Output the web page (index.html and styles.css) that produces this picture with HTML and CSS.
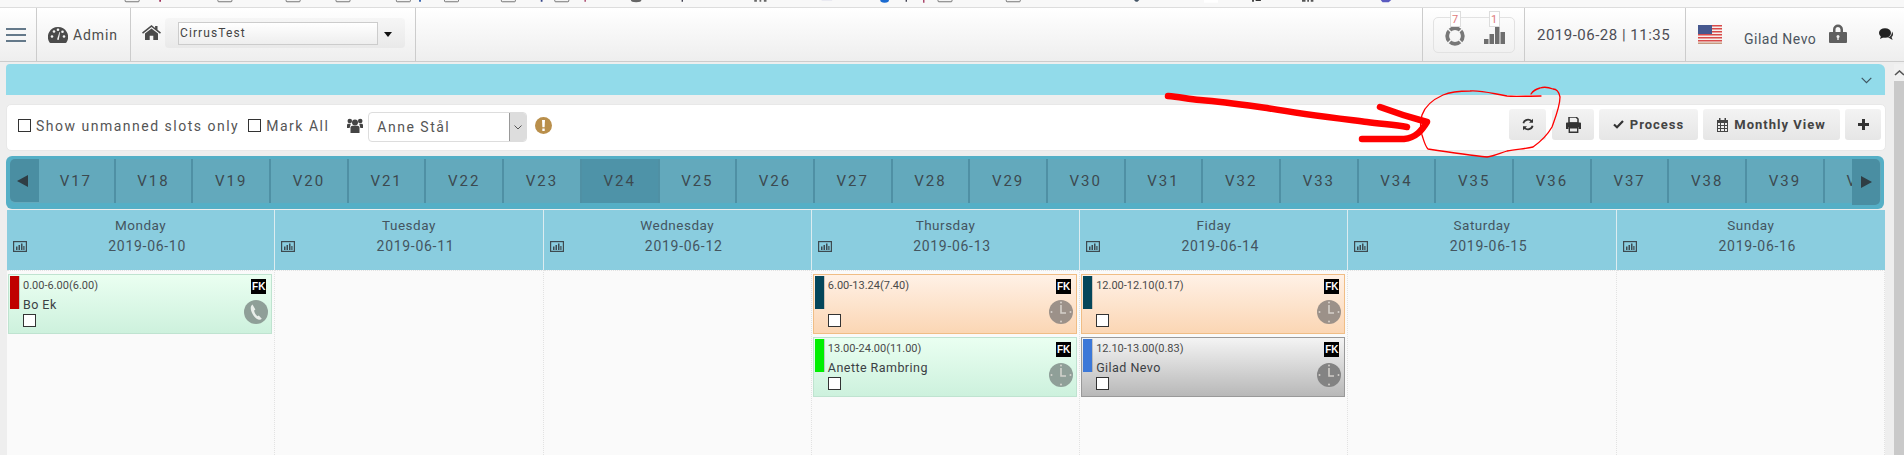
FILE: index.html
```html
<!DOCTYPE html>
<html lang="en">
<head>
<meta charset="utf-8">
<title>Schedule</title>
<link rel="stylesheet" href="styles.css">
</head>
<body>
<svg class="defs" width="0" height="0" aria-hidden="true">
  <symbol id="clock" viewBox="0 0 24 24"><circle cx="12" cy="12" r="12" fill="currentColor"/><path d="M12 5v8h5" fill="none" stroke="#e4e0da" stroke-width="1.6" opacity=".8"/><g fill="#e4e0da" opacity=".8"><circle cx="12" cy="2.5" r="1"/><circle cx="12" cy="21.5" r="1"/><circle cx="2.5" cy="12" r="1"/><circle cx="21.5" cy="12" r="1"/></g></symbol>
  <symbol id="phone" viewBox="0 0 24 24"><circle cx="12" cy="12" r="12" fill="currentColor"/><path d="M8.5 4.5c-2 1.4-2.3 4-.9 7.500 1.400 3.500 3.800 6.400 6.600 7.500 1.500.6 2.800.2 3.600-.7l-3-3.200-1.400.6c-1.700-1.100-3-3.500-3.300-5.600l1.300-1z" fill="#e9eeea"/></symbol>
  <symbol id="chartbox" viewBox="0 0 14 11"><rect x=".6" y=".6" width="12.800" height="9.800" fill="none" stroke="#3d4a50" stroke-width="1.200"/><path d="M3 5.500h1.500V9H3zM5.500 4H7v5H5.500zM8 2.500h1.500V9H8zM10.300 5h1.200v4h-1.200z" fill="#3d4a50"/></symbol>
</svg>

<svg class="strip" viewBox="0 0 1904 8" aria-hidden="true">
  <g class="strip-boxes">
    <rect x="7" y="-4" width="16" height="6" rx="1"/><rect x="113" y="-4" width="16" height="6" rx="1"/><rect x="191" y="-4" width="16" height="6" rx="1"/><rect x="248" y="-4" width="16" height="6" rx="1"/><rect x="317" y="-4" width="16" height="6" rx="1"/><rect x="372" y="-4" width="16" height="6" rx="1"/><rect x="437" y="-4" width="16" height="6" rx="1"/><rect x="498" y="-4" width="16" height="6" rx="1"/><rect x="936" y="-4" width="16" height="6" rx="1"/><rect x="1014" y="-4" width="16" height="6" rx="1"/>
  </g>
  <path d="M46 0h2v2h-2z" fill="#a0305a"/><path d="M343 0h2v2h-2z" fill="#2255aa"/><path d="M482 0h2v2h-2z" fill="#334488"/><path d="M532 0h1.500v2H532z" fill="#a0305a"/>
  <ellipse cx="591" cy="0" rx="6" ry="2.500" fill="#666"/><path d="M643 0h1.500v2H643z" fill="#334"/><path d="M726 0h3v2h-3zM732 0h2v2h-2zM737 0h3v2h-3z" fill="#666"/>
  <rect x="803" y="0" width="12" height="1" fill="#e8e8f0"/><ellipse cx="875" cy="0" rx="5" ry="3" fill="#1a6ad0"/><path d="M899 0h1.500v2H899z" fill="#334"/><path d="M919 0h1.500v3H919z" fill="#a0305a"/>
  <path d="M1160 0h6l-2 2h-2z" fill="#456"/><rect x="1240" y="0" width="16" height="3" fill="#fff"/><path d="M1295 0h2v2h-2zM1299 0h6v1h-6z" fill="#333"/><path d="M1352 0h4v2h-4zM1358 0h2v2h-2zM1362 0h3v2h-3z" fill="#555"/><path d="M1442 0h12l-3 2.500h-7z" fill="#5a5ac0"/>
</svg>

<header class="topbar">
  <div class="cell cell-menu"><span class="burger"><i></i><i></i><i></i></span></div>
  <div class="cell cell-admin">
    <svg class="ico-gauge" viewBox="0 0 20 16"><path d="M10 0a10 10 0 0 0-8.600 15.200c.2.400.6.800 1.100.8h15c.5 0 .9-.4 1.100-.8A10 10 0 0 0 10 0z" fill="#4b4b4b"/><g fill="#f4f4f4"><circle cx="4" cy="9.500" r="1.300"/><circle cx="6" cy="4.500" r="1.300"/><circle cx="10" cy="2.800" r="1.300"/><circle cx="16" cy="9.500" r="1.300"/><circle cx="14.500" cy="4.800" r="1.300"/></g><path d="M9 12.500 11.500 5l.6.200-1.400 7.800z" fill="#f4f4f4"/></svg>
    <span>Admin</span>
  </div>
  <div class="cell cell-org">
    <svg class="ico-home" viewBox="0 0 19 15"><path d="M9.500 0 0 7.600l1 1.100L9.500 2l8.500 6.700 1-1.100-3.500-2.800V1h-2.400v1.900z" fill="#4b4b4b"/><path d="M9.500 3.400 3 8.500V15h4.700v-4.300h3.600V15H16V8.500z" fill="#4b4b4b"/></svg>
    <div class="org-select"><span class="org-input">CirrusTest</span><i class="caret"></i></div>
  </div>
  <div class="cell cell-fill"></div>
  <div class="cell cell-stats">
    <div class="stats-box">
      <div class="stat">
        <span class="stat-badge">7</span>
        <svg class="ico-buoy" viewBox="0 0 20 20"><circle cx="10" cy="10" r="7.800" fill="none" stroke="#777" stroke-width="3.800"/><g stroke="#f4f4f4" stroke-width="1.300"><path d="M3 3l3.500 3.500M17 3l-3.500 3.500M3 17l3.500-3.500M17 17l-3.500-3.500"/></g></svg>
      </div>
      <div class="stat">
        <span class="stat-badge">1</span>
        <svg class="ico-bars" viewBox="0 0 21 18"><path d="M0 13h4.500v5H0zM5.500 8h4.500v10H5.500zM11 0h4.500v18H11zM16.500 6H21v12h-4.500z" fill="#6e6e6e"/></svg>
      </div>
    </div>
  </div>
  <div class="cell cell-date">2019-06-28 | 11:35</div>
  <div class="cell cell-user">
    <svg class="ico-flag" viewBox="0 0 24 19"><rect width="24" height="19" fill="#f6f0ec"/><path d="M0 0h24v1.500H0zM0 3h24v1.500H0zM0 6h24v1.500H0zM0 9h24v1.500H0zM0 12h24v1.500H0zM0 15h24v1.500H0z" fill="#d84a4a"/><rect y="17.500" width="24" height="1.500" fill="#c69a80"/><rect width="14" height="9" fill="#46588f"/></svg>
    <span class="user-name">Gilad Nevo</span>
    <svg class="ico-lock" viewBox="0 0 18 19"><path d="M4 8V5.500a5 5 0 0 1 10 0V8h-2.500V5.500a2.500 2.500 0 0 0-5 0V8z" fill="#5f5f5f"/><rect y="8" width="18" height="11" rx="1" fill="#5f5f5f"/><circle cx="9" cy="12.500" r="1.500" fill="#eee"/><rect x="8.300" y="12.500" width="1.400" height="3.500" fill="#eee"/></svg>
    <svg class="ico-chat" viewBox="0 0 15 13"><ellipse cx="6" cy="5" rx="6" ry="4.800" fill="#222"/><path d="M2 8 1 11l4-2z" fill="#222"/><path d="M13 3.500c1.600 1.800 1.400 4.500-.4 5.600l1 2.900-3.500-2H7.500c2.500 0 5.500-2.400 5.500-6.500z" fill="#333"/></svg>
  </div>
</header>

<div class="layout">
  <main class="main">
    <div class="accordion">
      <svg class="chevron" viewBox="0 0 11 7"><path d="M.7.8 5.500 5.600 10.300.8" fill="none" stroke="#3f5560" stroke-width="1.200"/></svg>
    </div>

    <div class="toolbar">
      <label class="check"><i class="box"></i>Show unmanned slots only</label>
      <label class="check check-all"><i class="box"></i>Mark All</label>
      <svg class="ico-users" viewBox="0 0 16 15"><g fill="#444"><circle cx="8" cy="4.500" r="3"/><circle cx="2.800" cy="3" r="2.300"/><circle cx="13.200" cy="3" r="2.300"/><path d="M3.500 15V9.500c0-1 1-1.800 2-1.800h5c1 0 2 .8 2 1.800V15z"/><path d="M0 10V7c0-.7.600-1.300 1.300-1.300h2.500L2.600 10zM16 10V7c0-.7-.6-1.300-1.300-1.300h-2.500l1.200 4.300z"/></g></svg>
      <div class="person-select"><span class="person-name">Anne Stål</span><span class="person-arrow"><svg viewBox="0 0 8 5"><path d="M.5.500 4 4 7.500.5" fill="none" stroke="#555"/></svg></span></div>
      <svg class="ico-info" viewBox="0 0 17 17"><circle cx="8.500" cy="8.500" r="8.500" fill="#b98f4b"/><path d="M7 3h3l-.4 7.300H7.400z" fill="#fff"/><rect x="7.300" y="11.500" width="2.400" height="2.500" fill="#fff"/></svg>
      <div class="actions">
        <button class="btn btn-icon">
          <svg class="ico-refresh" viewBox="0 0 12 13"><path d="M1.400 5.300A4.700 4.700 0 0 1 9.500 3.200M10.600 7.700A4.700 4.700 0 0 1 2.500 9.800" fill="none" stroke="#333" stroke-width="1.800"/><path d="M11 .8v4H7zM1 12.200v-4h4z" fill="#333"/></svg>
        </button>
        <button class="btn btn-print">
          <svg class="ico-print" viewBox="0 0 15 16"><path d="M3 0h7l2 2v4H3z" fill="none" stroke="#333" stroke-width="1.500"/><path d="M0 6.500c0-.6.500-1 1-1h13c.5 0 1 .4 1 1V12h-2.500v-2h-10v2H0z" fill="#333"/><path d="M3.300 10.800h8.400V15.300H3.300z" fill="none" stroke="#333" stroke-width="1.400"/></svg>
        </button>
        <button class="btn btn-process">
          <svg class="ico-check" viewBox="0 0 11 9"><path d="M1 4.500 4 7.300 10 1" fill="none" stroke="#333" stroke-width="2.200"/></svg>Process
        </button>
        <button class="btn btn-month">
          <svg class="ico-cal" viewBox="0 0 11 14"><path d="M0 2h11v12H0z" fill="#444"/><path d="M1 5h2v2H1zM4 5h3v2H4zM8 5h2v2H8zM1 8h2v2H1zM4 8h3v2H4zM8 8h2v2H8zM1 11h2v2H1zM4 11h3v2H4zM8 11h2v2H8z" fill="#eee"/><path d="M2 0h1.500v3H2zM7.500 0H9v3H7.500z" fill="#444"/></svg>Monthly View
        </button>
        <button class="btn btn-plus">
          <svg class="ico-plus" viewBox="0 0 11 11"><path d="M4 0h3v4h4v3H7v4H4V7H0V4h4z" fill="#333"/></svg>
        </button>
      </div>
    </div>

    <nav class="weekbar">
      <div class="weeks">
        <span class="week">V17</span><span class="week">V18</span><span class="week">V19</span><span class="week">V20</span><span class="week">V21</span><span class="week">V22</span><span class="week">V23</span><span class="week week-active">V24</span><span class="week">V25</span><span class="week">V26</span><span class="week">V27</span><span class="week">V28</span><span class="week">V29</span><span class="week">V30</span><span class="week">V31</span><span class="week">V32</span><span class="week">V33</span><span class="week">V34</span><span class="week">V35</span><span class="week">V36</span><span class="week">V37</span><span class="week">V38</span><span class="week">V39</span><span class="week">V40</span>
      </div>
      <span class="nav nav-prev"><i></i></span>
      <span class="nav nav-next"><i></i></span>
    </nav>

    <section class="calendar">
      <div class="day">
        <div class="day-head"><div class="day-name">Monday</div><div class="day-date"><svg class="ico-box"><use href="#chartbox"/></svg><span>2019-06-10</span></div></div>
        <div class="day-body">
          <article class="slot slot-green">
            <i class="slot-bar bar-red"></i>
            <div class="slot-main"><div class="slot-time">0.00-6.00(6.00)</div><div class="slot-name">Bo Ek</div><i class="slot-check"></i></div>
            <div class="slot-side"><b class="fk">FK</b><svg class="slot-ico ico-green"><use href="#phone"/></svg></div>
          </article>
        </div>
      </div>
      <div class="day">
        <div class="day-head"><div class="day-name">Tuesday</div><div class="day-date"><svg class="ico-box"><use href="#chartbox"/></svg><span>2019-06-11</span></div></div>
        <div class="day-body"></div>
      </div>
      <div class="day">
        <div class="day-head"><div class="day-name">Wednesday</div><div class="day-date"><svg class="ico-box"><use href="#chartbox"/></svg><span>2019-06-12</span></div></div>
        <div class="day-body"></div>
      </div>
      <div class="day">
        <div class="day-head"><div class="day-name">Thursday</div><div class="day-date"><svg class="ico-box"><use href="#chartbox"/></svg><span>2019-06-13</span></div></div>
        <div class="day-body">
          <article class="slot slot-orange">
            <i class="slot-bar bar-teal"></i>
            <div class="slot-main"><div class="slot-time">6.00-13.24(7.40)</div><div class="slot-name">&nbsp;</div><i class="slot-check"></i></div>
            <div class="slot-side"><b class="fk">FK</b><svg class="slot-ico ico-orange"><use href="#clock"/></svg></div>
          </article>
          <article class="slot slot-green">
            <i class="slot-bar bar-lime"></i>
            <div class="slot-main"><div class="slot-time">13.00-24.00(11.00)</div><div class="slot-name">Anette Rambring</div><i class="slot-check"></i></div>
            <div class="slot-side"><b class="fk">FK</b><svg class="slot-ico ico-green"><use href="#clock"/></svg></div>
          </article>
        </div>
      </div>
      <div class="day">
        <div class="day-head"><div class="day-name">Fiday</div><div class="day-date"><svg class="ico-box"><use href="#chartbox"/></svg><span>2019-06-14</span></div></div>
        <div class="day-body">
          <article class="slot slot-orange">
            <i class="slot-bar bar-teal"></i>
            <div class="slot-main"><div class="slot-time">12.00-12.10(0.17)</div><div class="slot-name">&nbsp;</div><i class="slot-check"></i></div>
            <div class="slot-side"><b class="fk">FK</b><svg class="slot-ico ico-orange"><use href="#clock"/></svg></div>
          </article>
          <article class="slot slot-gray">
            <i class="slot-bar bar-blue"></i>
            <div class="slot-main"><div class="slot-time">12.10-13.00(0.83)</div><div class="slot-name">Gilad Nevo</div><i class="slot-check"></i></div>
            <div class="slot-side"><b class="fk">FK</b><svg class="slot-ico ico-gray"><use href="#clock"/></svg></div>
          </article>
        </div>
      </div>
      <div class="day">
        <div class="day-head"><div class="day-name">Saturday</div><div class="day-date"><svg class="ico-box"><use href="#chartbox"/></svg><span>2019-06-15</span></div></div>
        <div class="day-body"></div>
      </div>
      <div class="day day-last">
        <div class="day-head"><div class="day-name">Sunday</div><div class="day-date"><svg class="ico-box"><use href="#chartbox"/></svg><span>2019-06-16</span></div></div>
        <div class="day-body"></div>
      </div>
    </section>
  </main>
  <aside class="scrollbar"><span class="scroll-up"><svg viewBox="0 0 10 6"><path d="M1 5 5.500 1 10 5" fill="none" stroke="#555" stroke-width="1.600"/></svg></span></aside>
</div>

<svg class="scribble" viewBox="0 0 1904 455" aria-hidden="true">
  <path class="scribble-thick" d="M1168 96 C1180 97 1188 99 1200 100 C1225 102 1245 105 1267 108 C1300 114 1335 118 1367 122 C1382 124 1395 125 1407 127"/>
  <path class="scribble-thick" d="M1380 107 C1396 113 1412 118 1427 122 C1422 130 1416 138 1404 139 L1362 139"/>
  <path class="scribble-thin" d="M1541 96 C1525 96 1515 97 1507 96 C1490 93 1480 90 1470 91 C1457 91 1450 92 1443 95 C1432 100 1425 106 1422 115 C1420 122 1420 128 1422 135 C1424 141 1425 146 1428 149 C1448 152 1468 155 1487 157 C1495 156 1500 153 1507 151 C1516 149 1525 149 1533 147 C1540 142 1548 134 1552 127 C1556 116 1560 106 1560 97 C1559 92 1556 89 1553 89 C1548 87 1543 87 1540 88 C1536 89 1533 91 1531 94"/>
</svg>
</body>
</html>
```

FILE: styles.css
```css
* { box-sizing: border-box; }

html, body { margin: 0; height: 455px; overflow: hidden; }

body {
  position: relative;
  background: #eee;
  font-family: Roboto, "Liberation Sans", sans-serif;
  color: #444;
}

i { display: block; }
.defs { position: absolute; }

.strip { display: block; width: 1904px; height: 8px; background: #f8f8f8; border-bottom: 1px solid #ddd; }
.strip-boxes rect { fill: #f4f4f4; stroke: #666; stroke-width: 1; }

/* top bar */
.topbar {
  display: flex;
  height: 54px;
  background: linear-gradient(#fff, #eee);
  border-bottom: 1px solid #ccc;
}
.cell { display: flex; align-items: center; border-right: 1px solid #ccc; flex: none; }
.cell-menu { width: 37px; padding: 0 0 0 6px; }
.burger { display: flex; flex-direction: column; gap: 3.500px; width: 20px; margin-top: 1px; }
.burger i { height: 2.500px; background: #64798a; }
.cell-admin { width: 94px; padding-left: 11px; gap: 5px; font-size: 14px; letter-spacing: .9px; color: #4c4c4c; }
.ico-gauge { width: 20px; height: 16px; }
.cell-org { width: 285px; padding-left: 11px; gap: 4px; }
.ico-home { width: 19px; height: 15px; margin-top: -5px; }
.org-select {
  width: 240px; height: 30px; margin-top: -4px; padding: 4px 0 0 13px;
  display: flex; align-items: flex-start; gap: 6px;
  background: linear-gradient(#f6f6f6, #e9e9e9); border-radius: 4px;
}
.org-input {
  width: 200px; height: 23px; padding-left: 1px; line-height: 21px;
  font-size: 12px; letter-spacing: 1.100px; color: #444;
  background: linear-gradient(#fff, #eee); border: 1px solid #ccc;
}
.caret { margin-top: 10px; border: 4px solid transparent; border-top: 5px solid #111; border-bottom: 0; }
.cell-fill { flex: 1; }
.cell-stats { width: 102px; padding: 0 0 0 10px; }
.stats-box {
  display: flex; width: 82px; height: 36px;
  border: 1px solid #e2e2e2; border-radius: 5px; padding: 0 9px 0 10px; justify-content: space-between;
}
.stat { display: flex; flex-direction: column; align-items: center; width: 22px; margin-top: -7px; }
.stat-badge {
  width: 11px; height: 16px; font-size: 11px; line-height: 15px; text-align: center;
  background: #fff; border: 1px solid #ddd; color: #e07b7b; margin-bottom: -1px; position: relative;
}
.ico-buoy { width: 20px; height: 20px; }
.ico-bars { width: 21px; height: 18px; }
.cell-date { width: 161px; padding-left: 12px; font-size: 15px; letter-spacing: .5px; color: #4d4d55; white-space: nowrap; }
.cell-user { width: 218px; border-right: 0; padding-left: 12px; }
.ico-flag { width: 24px; height: 19px; margin-top: -1px; }
.user-name { width: 74px; margin: 8px 0 0 22px; font-size: 14px; letter-spacing: .5px; color: #4c5560; white-space: nowrap; }
.ico-lock { width: 18px; height: 19px; margin: -2px 0 0 11px; }
.ico-chat { width: 15px; height: 13px; margin: 0 0 0 32px; }

/* main column */
.layout { display: flex; height: 393px; }
.main { width: 1885px; padding: 2px 0 0 6px; flex: none; }
.scrollbar { width: 10px; margin: 2px 0 0 9px; background: #c9c9c9; flex: none; }
.scroll-up { display: flex; justify-content: center; align-items: center; height: 17px; background: #f1f1f1; }
.scroll-up svg { width: 10px; height: 6px; }

.accordion {
  height: 31px; background: #92dbea; border-radius: 4px 6px 0 0;
  display: flex; justify-content: flex-end; padding: 13px 13px 0 0;
}
.chevron { width: 11px; height: 7px; }

.toolbar {
  display: flex; align-items: center;
  width: 1880px; height: 47px; margin-top: 9px; padding: 0 4px 4px 11px;
  background: #fff; border: 1px solid #e8e8e8; border-radius: 5px;
  font-size: 14px; letter-spacing: 1.500px; color: #555;
}
.check { display: flex; align-items: center; gap: 5px; white-space: nowrap; }
.box { width: 13px; height: 13px; border: 1px solid #333; background: #fff; flex: none; }
.check-all { margin-left: 9px; }
.ico-users { width: 16px; height: 15px; margin-left: 18px; }
.person-select {
  display: flex; justify-content: space-between; align-items: center;
  width: 159px; height: 30px; margin: 3px 0 0 5px; padding-left: 8px;
  border: 1px solid #ddd; border-radius: 4px; font-size: 14px;
}
.person-arrow { display: flex; align-items: center; justify-content: center; width: 17px; height: 28px; background: #ddd; border-left: 1px solid #999; border-radius: 0 3px 3px 0; }
.person-arrow svg { width: 8px; height: 5px; }
.ico-info { width: 17px; height: 17px; margin-left: 8px; }
.actions { display: flex; gap: 5px; margin-left: auto; margin-top: -2px; }
.btn {
  display: flex; align-items: center; justify-content: center; gap: 6px;
  height: 31px; padding: 0; border: 0; border-radius: 3px;
  background: linear-gradient(#f3f3f3, #e6e6e6);
  font: bold 13px Roboto, "Liberation Sans", sans-serif; letter-spacing: 1px; color: #444;
}
.btn-icon { width: 37px; margin-right: 1px; }
.btn-print { width: 42px; }
.btn-process { width: 99px; }
.btn-month { width: 137px; }
.btn-plus { width: 36px; }
.ico-refresh { width: 12px; height: 13px; }
.ico-print { width: 15px; height: 16px; }
.ico-check { width: 11px; height: 9px; }
.ico-cal { width: 11px; height: 14px; }
.ico-plus { width: 11px; height: 11px; }

/* week bar */
.weekbar {
  position: relative;
  width: 1878px; height: 53px; margin-top: 5px; padding: 3px 3px 6px 4px;
  background: #55afc6; border-radius: 6px;
}
.weeks {
  display: flex; height: 44px; padding-left: 28px; overflow: hidden;
  background: #63a9bc; border-radius: 5px;
}
.week {
  flex: none; width: 77.700px; display: flex; align-items: center; justify-content: center;
  border-right: 2px solid #4f90a4; font-size: 15px; letter-spacing: 2px; color: #3c4a50;
}
.week-active { background: #4e93a8; }
.nav { position: absolute; top: 3px; display: flex; align-items: center; justify-content: center; width: 29px; background: #4a8ea2; }
.nav-prev { left: 4px; height: 43px; padding-right: 4px; border-radius: 5px 0 0 5px; }
.nav-next { right: 4px; width: 28px; height: 46px; border-radius: 0 5px 5px 0; }
.nav i { border: 6px solid transparent; }
.nav-prev i { border-right: 11px solid #2f3d44; border-left: 0; }
.nav-next i { border-left: 11px solid #2f3d44; border-right: 0; }

/* calendar */
.calendar { display: grid; grid-template-columns: repeat(7, 1fr); width: 1878px; margin: 1px 0 0 1px; }
.day { min-width: 0; }
.day-head {
  height: 60px; padding-top: 6px; background: #8acddf;
  border-right: 1px solid #dcecf0; text-align: center; color: #44555f;
  font-size: 13.500px; letter-spacing: .5px;
}
.day-last .day-head { border-right: 0; }
.day-name { height: 18px; line-height: 18px; }
.day-date { display: flex; align-items: center; height: 18px; margin-top: 3px; padding: 0 7px 0 6px; font-size: 14px; letter-spacing: .7px; }
.day-date span { flex: 1; }
.ico-box { width: 14px; height: 11px; flex: none; }
.day-body {
  height: 185px; padding-top: 3px; background: #fafafa;
  border-right: 1px dotted #e2e2e2; border-top: 1px dotted #e2e2e2;
  display: flex; flex-direction: column; gap: 3px;
}
.slot {
  display: grid; grid-template-columns: 9px 1fr auto;
  height: 60px; margin: 0 2px 0 1px; padding: 1px 3px 1px 1px;
  border: 1px solid;
}
.slot-green { background: linear-gradient(#eafff1, #cdf1dd); border-color: #bfe3d0; }
.slot-orange { background: linear-gradient(#fff1e6, #fbd6b4); border-color: #f0bd85; }
.slot-gray { background: linear-gradient(#f4f4f4, #b8b8b8); border-color: #999; }
.slot-bar { height: 33px; box-shadow: 1px 0 0 rgba(120, 120, 120, .35); }
.bar-red { background: #c00000; }
.bar-teal { background: #04465a; }
.bar-lime { background: #00f000; }
.bar-blue { background: #3c78d8; }
.slot-main { padding-left: 4px; display: flex; flex-direction: column; }
.slot-time { height: 16px; margin-top: 2px; font-size: 11px; line-height: 16px; color: #4a4a4a; }
.slot-name { height: 16px; margin-top: 3px; font-size: 12.500px; line-height: 16px; letter-spacing: .45px; color: #3b4044; }
.slot-check { width: 13px; height: 13px; margin-top: 1px; background: #fff; border: 1px solid #333; }
.slot-side { display: flex; flex-direction: column; align-items: flex-end; }
.fk {
  width: 15px; height: 15px; margin: 3px 2px 0 0; background: #000; color: #fff;
  font: bold 10px/15px "Liberation Sans", sans-serif; text-align: center;
}
.slot-ico { width: 24px; height: 24px; margin-top: 6px; }
.ico-green { color: #8f9f98; }
.ico-orange { color: #9c9189; }
.ico-gray { color: #838383; }

/* hand-drawn annotation lying over the page */
.scribble { position: absolute; left: 0; top: 0; width: 1904px; height: 455px; pointer-events: none; }
.scribble path { fill: none; stroke: #f00; stroke-linecap: round; stroke-linejoin: round; }
.scribble-thick { stroke-width: 6.500px; }
.scribble-thin { stroke-width: 1.300px; }
```
